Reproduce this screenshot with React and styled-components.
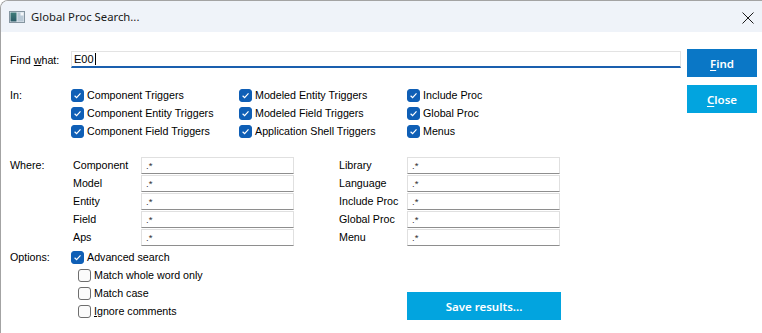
import styled, { createGlobalStyle } from "styled-components";

const GlobalStyle = createGlobalStyle`
  html, body {
    margin: 0;
    padding: 0;
    background: #fff;
  }
  body {
    font-family: "Liberation Sans", Arial, sans-serif;
    font-size: 10.7px;
    color: #000;
  }
`;

const triggers = [
  ["Component Triggers", "Modeled Entity Triggers", "Include Proc"],
  ["Component Entity Triggers", "Modeled Field Triggers", "Global Proc"],
  ["Component Field Triggers", "Application Shell Triggers", "Menus"],
];

const whereLeft = ["Component", "Model", "Entity", "Field", "Aps"];
const whereRight = ["Library", "Language", "Include Proc", "Global Proc", "Menu"];

const WindowIcon = () => (
  <svg width="16" height="12" viewBox="0 0 16 12">
    <defs>
      <linearGradient id="wl" x1="0" y1="0" x2="0" y2="1">
        <stop offset="0" stopColor="#3f7d7a" />
        <stop offset="1" stopColor="#2a5a66" />
      </linearGradient>
    </defs>
    <rect x="0.5" y="0.5" width="15" height="11" fill="#dfe7ee" stroke="#8595a0" />
    <rect x="1.5" y="1.5" width="6" height="9" fill="url(#wl)" />
    <rect x="8.5" y="1.5" width="6" height="9" fill="#b9c9d6" />
    <rect x="11.5" y="1.5" width="3" height="3" fill="#f4f7fa" />
  </svg>
);

const CloseGlyph = () => (
  <svg width="12" height="12" viewBox="0 0 12 12">
    <path d="M0.5 0.5 L11.5 11.5 M11.5 0.5 L0.5 11.5" stroke="#1b1b1b" strokeWidth="1" fill="none" />
  </svg>
);

const Check = ({ checked }) => (
  <Box $checked={checked}>
    {checked && (
      <svg width="9" height="9" viewBox="0 0 9 9">
        <path d="M1.6 4.7 L3.6 6.6 L7.5 2.4" stroke="#fff" strokeWidth="1.2" fill="none" />
      </svg>
    )}
  </Box>
);

const CheckItem = ({ checked, indent, children }) => (
  <CheckRow $indent={indent}>
    <Check checked={checked} />
    <span>{children}</span>
  </CheckRow>
);

export default function App() {
  return (
    <>
      <GlobalStyle />
      <Window>
        <TitleBar>
          <WindowIcon />
          <Title>Global Proc Search...</Title>
          <CloseButton>
            <CloseGlyph />
          </CloseButton>
        </TitleBar>
        <Body>
          <Main>
            <FindRow>
              <Label>
                Find <u>w</u>hat:
              </Label>
              <FindField>
                E00
                <Caret />
              </FindField>
            </FindRow>

            <Section $top={18}>
              <Label>In:</Label>
              <TriggerGrid>
                {triggers.flat().map((t) => (
                  <CheckItem key={t} checked>
                    {t}
                  </CheckItem>
                ))}
              </TriggerGrid>
            </Section>

            <Section $top={16}>
              <Label>Where:</Label>
              <WhereWrap>
                <WhereColumn $pad={2}>
                  {whereLeft.map((w) => (
                    <WhereRow key={w}>
                      <span>{w}</span>
                      <PatternInput defaultValue=".*" />
                    </WhereRow>
                  ))}
                </WhereColumn>
                <WhereColumn>
                  {whereRight.map((w) => (
                    <WhereRow key={w}>
                      <span>{w}</span>
                      <PatternInput defaultValue=".*" />
                    </WhereRow>
                  ))}
                </WhereColumn>
              </WhereWrap>
            </Section>

            <Section $top={2}>
              <Label>Options:</Label>
              <OptionsWrap>
                <OptionList>
                  <CheckItem checked>Advanced search</CheckItem>
                  <CheckItem indent>Match whole word only</CheckItem>
                  <CheckItem indent>Match case</CheckItem>
                  <CheckItem indent>
                    <u>I</u>gnore comments
                  </CheckItem>
                </OptionList>
                <SaveButton>Save results...</SaveButton>
              </OptionsWrap>
            </Section>
          </Main>
          <Side>
            <ActionButton $tone="dark">
              <u>F</u>ind
            </ActionButton>
            <ActionButton>
              <u>C</u>lose
            </ActionButton>
          </Side>
        </Body>
      </Window>
    </>
  );
}

const Window = styled.div`
  width: 762px;
  height: 333px;
  box-sizing: border-box;
  border-top: 1px solid #a3a3a3;
  border-left: 1px solid #a3a3a3;
  border-top-left-radius: 8px;
  overflow: hidden;
  background: #fff;
  display: flex;
  flex-direction: column;
`;

const TitleBar = styled.div`
  height: 31px;
  flex-shrink: 0;
  background: #eff3f9;
  display: flex;
  align-items: center;
  padding-left: 8px;
  svg {
    display: block;
  }
`;

const Title = styled.div`
  margin-left: 6px;
  font-family: "Segoe UI", "Noto Sans", sans-serif;
  font-size: 11.3px;
  color: #1a1a1a;
  flex: 1;
`;

const CloseButton = styled.div`
  width: 12px;
  height: 12px;
  margin-right: 8px;
  margin-top: 2px;
`;

const Body = styled.div`
  flex: 1;
  display: flex;
  padding-left: 9px;
`;

const Main = styled.div`
  flex: 1;
  padding-top: 19px;
  display: flex;
  flex-direction: column;
`;

const Label = styled.div`
  width: 61px;
  flex-shrink: 0;
  line-height: 18px;
  u {
    text-decoration-thickness: 1px;
    text-underline-offset: 1px;
  }
`;

const FindRow = styled.div`
  display: flex;
  align-items: center;
  height: 17px;
`;

const FindField = styled.div`
  flex: 1;
  height: 17px;
  box-sizing: border-box;
  border: 1px solid #e3e3e3;
  border-bottom: 2px solid #1a5fae;
  padding-left: 2px;
  display: flex;
  align-items: center;
  font-size: 11px;
`;

const Caret = styled.span`
  width: 1px;
  height: 12px;
  background: #000;
  margin-left: 1px;
`;

const Section = styled.div`
  display: flex;
  margin-top: ${(p) => p.$top}px;
`;

const TriggerGrid = styled.div`
  display: grid;
  grid-template-columns: repeat(3, 168px);
  grid-auto-rows: 18px;
`;

const CheckRow = styled.div`
  display: flex;
  align-items: center;
  height: 18px;
  padding-left: ${(p) => (p.$indent ? 7 : 0)}px;
  white-space: nowrap;
  span {
    margin-left: 3px;
  }
  u {
    text-decoration-thickness: 1px;
  }
`;

const Box = styled.div`
  width: 13px;
  height: 13px;
  box-sizing: border-box;
  border-radius: 3px;
  flex-shrink: 0;
  display: flex;
  align-items: center;
  justify-content: center;
  background: ${(p) => (p.$checked ? "#0f5fb6" : "#fbfbfb")};
  border: 1px solid ${(p) => (p.$checked ? "#0f5fb6" : "#6e6e6e")};
  svg {
    display: block;
  }
`;

const WhereWrap = styled.div`
  display: flex;
  gap: 45px;
`;

const WhereColumn = styled.div`
  padding-left: ${(p) => p.$pad || 0}px;
  display: grid;
  grid-auto-rows: 18px;
`;

const WhereRow = styled.div`
  display: grid;
  grid-template-columns: 68px 153px;
  align-items: center;
  span {
    line-height: 18px;
  }
`;

const PatternInput = styled.input`
  height: 17px;
  margin: 1px 0 0;
  box-sizing: border-box;
  border: 1px solid #e0e0e0;
  border-bottom-color: #8e8e8e;
  padding: 0 0 0 4px;
  font-family: "Liberation Sans", Arial, sans-serif;
  font-size: 9.5px;
  color: #333;
  background: #fff;
  outline: none;
`;

const OptionsWrap = styled.div`
  display: flex;
`;

const OptionList = styled.div`
  width: 336px;
  display: flex;
  flex-direction: column;
`;

const ActionButton = styled.div`
  width: 70px;
  height: 28px;
  display: flex;
  align-items: center;
  justify-content: center;
  background: ${(p) => (p.$tone === "dark" ? "#0a77c6" : "#02a4df")};
  color: #fff;
  font-family: "Segoe UI", "Noto Sans", sans-serif;
  font-weight: 600;
  font-size: 11.5px;
  u {
    text-decoration-thickness: 1px;
    text-underline-offset: 2px;
  }
`;

const SaveButton = styled(ActionButton)`
  width: 154px;
  margin-top: 44px;
  background: #02a4df;
`;

const Side = styled.div`
  width: 70px;
  margin: 17px 5px 0 6px;
  display: flex;
  flex-direction: column;
  gap: 8px;
`;
